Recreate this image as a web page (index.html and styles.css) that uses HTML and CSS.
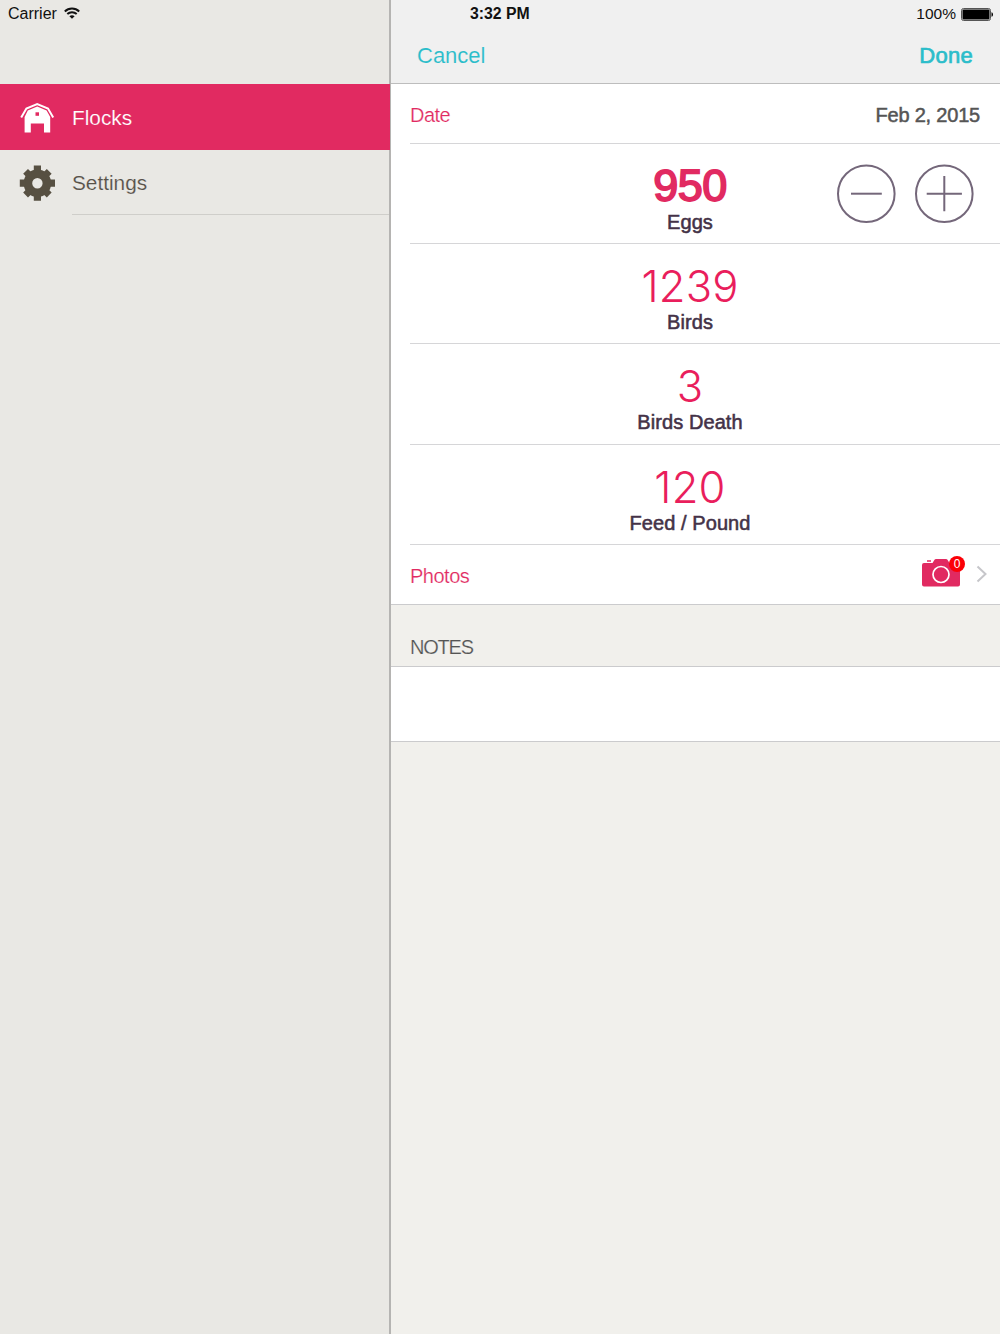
FILE: index.html
```html
<!DOCTYPE html>
<html lang="en">
<head>
<meta charset="utf-8">
<title>Flocks</title>
<link rel="stylesheet" href="styles.css">
</head>
<body>
<div class="app">
  <aside class="sidebar">
    <div class="sidebar-top">
      <span>Carrier</span>
      <svg class="wifi" width="16" height="12" viewBox="0 0 16 12" fill="none" stroke="#111" stroke-width="2">
        <path d="M.8 4.4C4.8.6 11.2.6 15.2 4.4M3.3 7.1c2.7-2.5 6.7-2.5 9.4 0"/>
        <path d="M8 11.8 5.4 9.2c1.5-1.4 3.7-1.4 5.2 0z" fill="#111" stroke="none"/>
      </svg>
    </div>
    <nav>
      <a class="nav-item active">
        <svg class="nav-icon" width="36" height="36" viewBox="0 0 36 36">
          <path d="M2.2 18.4 7.4 9.600 18.200 5 29 9.600 34.200 18.400" fill="none" stroke="#fff" stroke-width="2"/>
          <path d="M18.200 7.400 27.600 11.500 31.200 18V33.500h-6.200v-9H11.800v9H5.600V18L8.800 11.500z" fill="#fff"/>
          <path d="M16.500 13.300h3.500v3.500h-3.500z" fill="#e12a61"/>
        </svg>
        <span>Flocks</span>
      </a>
      <a class="nav-item">
        <svg class="nav-icon" width="36" height="36" viewBox="-18.4 -18.2 36 36" fill="#575042">
          <path fill-rule="evenodd" d="M0-13.8A13.8 13.8 0 1 1 0 13.8 13.8 13.8 0 1 1 0-13.8zM0-5.2A5.2 5.2 0 1 0 0 5.2 5.2 5.2 0 1 0 0-5.2z"/>
          <g id="teeth">
            <path d="M-3.6-17.6h7.2v6h-7.2zM-3.6 11.6h7.2v6h-7.2zM-17.6-3.6h6v7.2h-6zM11.6-3.6h6v7.2h-6z"/>
          </g>
          <use href="#teeth" transform="rotate(45) scale(.95)"/>
        </svg>
        <span class="nav-label">Settings</span>
      </a>
    </nav>
  </aside>
  <main class="detail">
    <header class="topbar">
      <div class="status">
        <b class="time">3:32 PM</b>
        <span class="battery">100%
          <svg width="32" height="13" viewBox="0 0 32 13">
            <rect x=".5" y=".5" width="29" height="12" rx="2" fill="#eee" stroke="#555"/>
            <rect x="1.5" y="1.5" width="27" height="10" rx="1"/>
            <path d="M30.5 4.2c2 .6 2 4 0 4.6z"/>
          </svg>
        </span>
      </div>
      <div class="actions"><a>Cancel</a><a class="done">Done</a></div>
    </header>
    <section class="form">
      <div class="row date"><span class="field">Date</span><span class="value">Feb 2, 2015</span></div>
      <div class="row stat selected">
        <div class="figure"><div class="number">950</div><div class="caption">Eggs</div></div>
        <div class="stepper">
          <svg width="60" height="60" viewBox="0 0 60 60" fill="none" stroke="#74677a" stroke-width="2"><circle cx="30.3" cy="29.7" r="28.3"/><path d="M15 29.700H45.800"/></svg>
          <svg width="60" height="60" viewBox="0 0 60 60" fill="none" stroke="#74677a" stroke-width="2"><circle cx="30.3" cy="29.7" r="28.3"/><path d="M12.700 29.700H47.900M30.300 12.100V47.300"/></svg>
        </div>
      </div>
      <div class="row stat"><div class="figure"><div class="number">1239</div><div class="caption">Birds</div></div></div>
      <div class="row stat tall"><div class="figure"><div class="number">3</div><div class="caption">Birds Death</div></div></div>
      <div class="row stat"><div class="figure"><div class="number">120</div><div class="caption">Feed / Pound</div></div></div>
      <div class="row photos">
        <span class="field">Photos</span>
        <span class="camera">
          <svg width="38" height="28" viewBox="0 0 38 28">
            <path d="M5 1.2h4v1.6H5zM2 4h8.5l2-3.2Q13 0 14 0h10q1 0 1.5.8l2 3.2H36q2 0 2 2v19.500q0 2-2 2H2q-2 0-2-2V6q0-2 2-2z" fill="#e12a61"/>
            <circle cx="19" cy="15.500" r="8" fill="none" stroke="#fff" stroke-width="1.700"/>
          </svg>
          <span class="badge">0</span>
        </span>
        <svg class="chevron" width="12" height="18" viewBox="0 0 12 18" fill="none" stroke="#c6c6ca" stroke-width="2"><path d="M1.500 1.500 9.500 9 1.500 16.500"/></svg>
      </div>
    </section>
    <h2 class="notes-title">NOTES</h2>
    <div class="notes"></div>
  </main>
</div>
</body>
</html>
```
FILE: styles.css
```css
* { box-sizing: border-box; }
body { margin: 0; font-family: "Liberation Sans", Arial, sans-serif; font-size: 20px; background: #f1f0ec; }
svg { display: block; flex: none; }
.app { display: grid; grid-template-columns: 391px 1fr; height: 1334px; overflow: hidden; }

.sidebar { background: #e9e8e4; border-right: 2px solid #b5b4b2; }
.sidebar-top { height: 84px; padding: 5px 0 0 8px; display: flex; align-items: flex-start; gap: 7px; font-size: 16px; line-height: 18px; color: #111; }
.wifi { margin-top: 2px; }
.nav-item { display: flex; align-items: center; height: 65px; padding-left: 19px; gap: 17px; font-size: 20.8px; color: #575149; -webkit-text-stroke: .15px #e9e8e4; }
.nav-item.active { height: 66px; margin-right: -1px; background: #e12a61; color: #fff; -webkit-text-stroke: .15px #e12a61; }
.nav-item.active span { padding-top: 2px; }
.nav-label { flex: 1; align-self: stretch; line-height: 66px; border-bottom: 1px solid #cfceca; }

.topbar { height: 84px; background: #f0f0f0; border-bottom: 1px solid #bdbdbd; }
.status { display: flex; justify-content: space-between; padding: 5px 7px 0 79px; height: 36px; font-size: 15.5px; line-height: 18px; color: #111; }
.time { font-size: 15.8px; }
.battery { display: flex; gap: 5px; height: 18px; align-items: center; }
.actions { display: flex; justify-content: space-between; padding: 7px 27px 0 26px; font-size: 22px; line-height: 25px; color: #2bbdca; -webkit-text-stroke: .1px #f0f0f0; }
.done { letter-spacing: .3px; -webkit-text-stroke: .7px #2bbdca; }

.form { background: #fff; padding-left: 19px; border-bottom: 1px solid #cbcbcd; }
.row { display: flex; align-items: center; height: 100px; border-bottom: 1px solid #d6d6d8; }
.date { height: 60px; padding-right: 20px; justify-content: space-between; padding-top: 3px; }
.field { color: #e12a61; letter-spacing: -.5px; -webkit-text-stroke: .2px #fff; }
.value { color: #555; letter-spacing: -.2px; -webkit-text-stroke: .5px #555; }
.stat { display: grid; grid-template-columns: 560px 1fr; align-items: start; }
.tall { height: 101px; }
.figure { text-align: center; padding-top: 20px; }
.number { font-family: Inter, "Liberation Sans", sans-serif; font-weight: 270; font-size: 43.5px; line-height: 45px; padding-bottom: 1px; letter-spacing: .2px; color: #e91e5c; }
.selected .number { font-family: "Liberation Sans", Arial, sans-serif; font-size: 45px; font-weight: 400; line-height: 44px; padding-bottom: 2px; color: #e12a61; -webkit-text-stroke: 1.8px #e12a61; letter-spacing: -.5px; }
.caption { line-height: 24px; color: #443247; letter-spacing: .08px; -webkit-text-stroke: .55px #443247; }
.stepper { display: flex; gap: 18px; padding-top: 20px; margin-left: -134px; }
.photos { height: 59px; border-bottom: 0; padding-right: 12px; padding-top: 3px; }
.camera { position: relative; margin: -6px 16px 0 auto; }
.badge { position: absolute; left: 27px; top: -3px; width: 16px; height: 16px; border-radius: 50%; background: #fb0007; color: #fff; font-size: 12px; line-height: 16px; text-align: center; }
.chevron { margin-top: -5px; }
.notes-title { margin: 0; height: 62px; padding: 30px 0 0 19px; font-size: 20px; line-height: 24px; letter-spacing: -1.2px; font-weight: 400; color: #555; border-bottom: 1px solid #cbcbcd; -webkit-text-stroke: .2px #f1f0ec; }
.notes { height: 75px; background: #fff; border-bottom: 1px solid #cbcbcd; }
```
